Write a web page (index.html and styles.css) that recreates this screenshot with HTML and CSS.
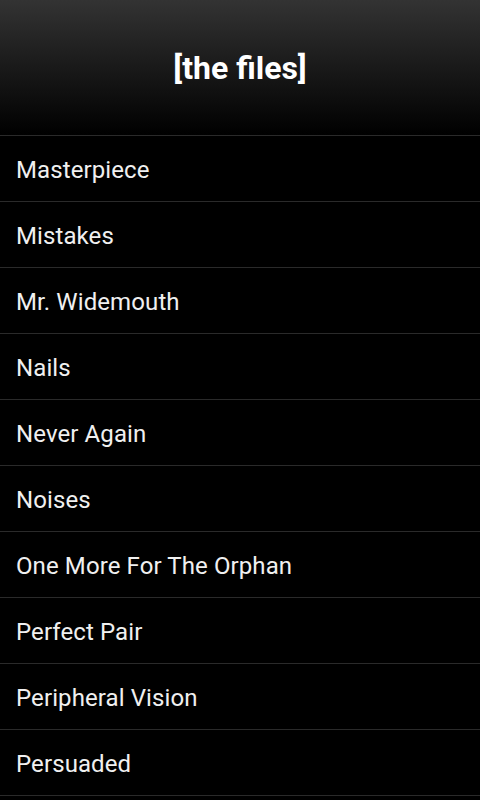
FILE: index.html
```html
<html>
<head>
<link rel="stylesheet" href="styles.css">
</head>
<body>
<div class="header"><h1>[the files]</h1></div>
<ul class="songs">
<li>Masterpiece</li>
<li>Mistakes</li>
<li>Mr. Widemouth</li>
<li>Nails</li>
<li>Never Again</li>
<li>Noises</li>
<li>One More For The Orphan</li>
<li>Perfect Pair</li>
<li>Peripheral Vision</li>
<li>Persuaded</li>
<li class="empty"></li>
</ul>
</body>
</html>
```
FILE: styles.css
```css
body {
  margin: 0;
  background-color: #000000;
  font-family: Roboto, "Noto Sans", sans-serif;
  overflow: hidden;
  height: 800px;
}

.header {
  height: 135px;
  display: flex;
  align-items: center;
  justify-content: center;
  background: linear-gradient(#333333, #000000);
}

h1 {
  margin: 0;
  color: #ffffff;
  font-size: 32px;
  font-weight: bold;
}

.songs {
  list-style: none;
  margin: 0;
  padding: 0;
}

.songs li {
  box-sizing: border-box;
  height: 66px;
  border-top: 1px solid #2a2a2a;
  display: flex;
  align-items: center;
  padding-left: 16px;
  padding-top: 2px;
  color: #f0f0f0;
  font-size: 24px;
  letter-spacing: 0.1px;
}

.songs li.empty {
  height: 5px;
}
```
